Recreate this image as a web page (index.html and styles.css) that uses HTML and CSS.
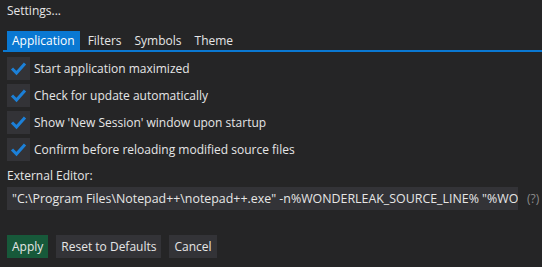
FILE: index.html
```html
<!DOCTYPE html>
<html>
<head>
    <meta charset="UTF-8" />
    <title>Settings</title>
    <link rel="stylesheet" href="styles.css">
</head>
<body>
    <div class="window">
        <div class="title">Settings...</div>
        <div class="tabbar">
            <span class="tab active">Application</span>
            <span class="tab">Filters</span>
            <span class="tab">Symbols</span>
            <span class="tab">Theme</span>
        </div>
        <div class="options">
            <label class="check"><span class="box"><svg viewBox="0 0 23 23" width="23" height="23"><path d="M5 11.5 L9.5 16 L18 6.5" fill="none" stroke="#1c80d8" stroke-width="3"/></svg></span>Start application maximized</label>
            <label class="check"><span class="box"><svg viewBox="0 0 23 23" width="23" height="23"><path d="M5 11.5 L9.5 16 L18 6.5" fill="none" stroke="#1c80d8" stroke-width="3"/></svg></span>Check for update automatically</label>
            <label class="check"><span class="box"><svg viewBox="0 0 23 23" width="23" height="23"><path d="M5 11.5 L9.5 16 L18 6.5" fill="none" stroke="#1c80d8" stroke-width="3"/></svg></span>Show 'New Session' window upon startup</label>
            <label class="check"><span class="box"><svg viewBox="0 0 23 23" width="23" height="23"><path d="M5 11.5 L9.5 16 L18 6.5" fill="none" stroke="#1c80d8" stroke-width="3"/></svg></span>Confirm before reloading modified source files</label>
        </div>
        <div class="field-label">External Editor:</div>
        <div class="field">
            <div class="input">"C:\Program Files\Notepad++\notepad++.exe" -n%WONDERLEAK_SOURCE_LINE% "%WONDERLEAK_SOURCE_FILE%"</div>
            <span class="help">(?)</span>
        </div>
        <div class="buttons">
            <button class="btn apply">Apply</button>
            <button class="btn">Reset to Defaults</button>
            <button class="btn">Cancel</button>
        </div>
    </div>
</body>
</html>
```

FILE: styles.css
```css
body {
    margin: 0;
    background: #252526;
    color: #e6e6e6;
    font-family: 'Open Sans', 'Noto Sans', sans-serif;
    font-size: 12px;
}
.window {
    width: 542px;
    height: 267px;
    box-sizing: border-box;
    padding: 0 0 0 7px;
}
.title {
    height: 22px;
    line-height: 22px;
}
.tabbar {
    margin-top: 9px;
    margin-left: -4px;
    width: 535px;
    display: flex;
    gap: 3px;
    border-bottom: 2px solid #0a78d2;
    padding-left: 4px;
}
.tab {
    height: 19px;
    line-height: 19px;
    padding: 0 5px;
}
.active {
    background: #0a78d2;
    color: #fff;
}
.options {
    margin-top: 5px;
    display: flex;
    flex-direction: column;
    gap: 4px;
}
.check {
    display: flex;
    align-items: center;
    gap: 4px;
    height: 23px;
}
.box {
    width: 23px;
    height: 23px;
    background: #333337;
    display: block;
}
.box svg { display: block; }
.field-label {
    margin-top: 5px;
    height: 20px;
    line-height: 20px;
}
.field {
    display: flex;
    align-items: center;
    margin-top: 1px;
}
.input {
    width: 511px;
    height: 23px;
    line-height: 23px;
    background: #333337;
    padding-left: 5px;
    box-sizing: border-box;
    white-space: nowrap;
    overflow: hidden;
    font-size: 12.4px;
}
.help {
    color: #8a8a8a;
    margin-left: 9px;
}
.buttons {
    margin-top: 25px;
    display: flex;
    gap: 8px;
}
.btn {
    height: 23px;
    padding: 0 5px;
    border: none;
    background: #333337;
    color: #e6e6e6;
    font-family: inherit;
    font-size: 12px;
}
.apply {
    background: #17593a;
}
```
